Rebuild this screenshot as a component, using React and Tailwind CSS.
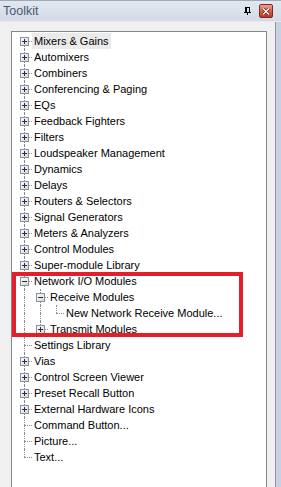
import React from "react";

// tree rows: level, expander ("+", "-", or null), label
const ROWS = [
  { l: 1, e: "+", t: "Mixers & Gains", sel: true },
  { l: 1, e: "+", t: "Automixers" },
  { l: 1, e: "+", t: "Combiners" },
  { l: 1, e: "+", t: "Conferencing & Paging" },
  { l: 1, e: "+", t: "EQs" },
  { l: 1, e: "+", t: "Feedback Fighters" },
  { l: 1, e: "+", t: "Filters" },
  { l: 1, e: "+", t: "Loudspeaker Management" },
  { l: 1, e: "+", t: "Dynamics" },
  { l: 1, e: "+", t: "Delays" },
  { l: 1, e: "+", t: "Routers & Selectors" },
  { l: 1, e: "+", t: "Signal Generators" },
  { l: 1, e: "+", t: "Meters & Analyzers" },
  { l: 1, e: "+", t: "Control Modules" },
  { l: 1, e: "+", t: "Super-module Library" },
  { l: 1, e: "-", t: "Network I/O Modules" },
  { l: 2, e: "-", t: "Receive Modules" },
  { l: 3, e: null, t: "New Network Receive Module..." },
  { l: 2, e: "+", t: "Transmit Modules" },
  { l: 1, e: null, t: "Settings Library" },
  { l: 1, e: "+", t: "Vias" },
  { l: 1, e: "+", t: "Control Screen Viewer" },
  { l: 1, e: "+", t: "Preset Recall Button" },
  { l: 1, e: "+", t: "External Hardware Icons" },
  { l: 1, e: null, t: "Command Button..." },
  { l: 1, e: null, t: "Picture..." },
  { l: 1, e: null, t: "Text..." },
];

// does a node at `level` (found at or above row i) have a later sibling?
const hasNext = (i, level) => {
  for (let j = i + 1; j < ROWS.length; j++) {
    if (ROWS[j].l < level) return false;
    if (ROWS[j].l === level) return true;
  }
  return false;
};

const Expander = ({ sign }) => (
  <svg width="9" height="9" viewBox="0 0 9 9" className="absolute left-[4px] top-[4px]">
    <defs>
      <linearGradient id="exp" x1="0" y1="0" x2="1" y2="1">
        <stop offset="0" stopColor="#ffffff" />
        <stop offset="1" stopColor="#d6d6ce" />
      </linearGradient>
    </defs>
    <rect x="0.5" y="0.5" width="8" height="8" fill="url(#exp)" stroke="#8a8f9c" />
    <rect x="2" y="4" width="5" height="1" fill="#1f2f4f" />
    {sign === "+" && <rect x="4" y="2" width="1" height="5" fill="#1f2f4f" />}
  </svg>
);

const Column = ({ top, bottom, horiz, sign }) => (
  <div className="relative w-[16px] h-[16px] shrink-0">
    {top && <div className="absolute left-[8px] top-0 h-[8px] border-l border-dotted border-[#8c8c8c]" />}
    {bottom && <div className="absolute left-[8px] top-[8px] h-[8px] border-l border-dotted border-[#8c8c8c]" />}
    {horiz && <div className="absolute left-[8px] top-[8px] w-[8px] border-t border-dotted border-[#8c8c8c]" />}
    {sign && <Expander sign={sign} />}
  </div>
);

const TreeRow = ({ row, i }) => {
  const cols = [];
  for (let c = 1; c <= row.l; c++) {
    if (c < row.l) {
      const on = hasNext(i, c);
      cols.push(<Column key={c} top={on} bottom={on} />);
    } else {
      cols.push(
        <Column key={c} top={i !== 0} bottom={hasNext(i, c)} horiz sign={row.e} />
      );
    }
  }
  return (
    <div className="flex h-[16px] items-center">
      {cols}
      <span
        className={
          "h-[16px] leading-[16px] px-[2px] whitespace-nowrap text-[11px] text-black " +
          (row.sel ? "bg-[#ebebeb]" : "")
        }
      >
        {row.t}
      </span>
    </div>
  );
};

const PinIcon = () => (
  <svg width="7" height="8" viewBox="0 0 7 8" className="block">
    <rect x="1" y="0" width="5" height="1" fill="#000" />
    <rect x="1" y="1" width="2" height="4" fill="#000" />
    <rect x="5" y="1" width="1" height="4" fill="#000" />
    <rect x="0" y="5" width="7" height="1" fill="#000" />
    <rect x="3" y="6" width="1" height="2" fill="#000" />
  </svg>
);

const CloseButton = () => (
  <div className="w-[14px] h-[14px] rounded-[2px] border border-[#7a2a22] bg-gradient-to-b from-[#e9a08e] via-[#d3624c] to-[#b63a26] flex items-center justify-center">
    <svg width="8" height="7" viewBox="0 0 8 7">
      <path d="M1 0.5 L7 6.5 M7 0.5 L1 6.5" stroke="#5a1a12" strokeWidth="2.6" />
      <path d="M1 0.5 L7 6.5 M7 0.5 L1 6.5" stroke="#ffffff" strokeWidth="1.4" />
    </svg>
  </div>
);

export default function App() {
  return (
    <div
      className="relative w-[281px] h-[487px] overflow-hidden flex flex-col bg-[#f0f0f0]"
      style={{ fontFamily: '"Liberation Sans", Arial, sans-serif' }}
    >
      {/* title bar */}
      <div className="h-[22px] shrink-0 flex items-center border-t border-[#a4a9b1] bg-gradient-to-b from-[#e2e8f0] to-[#d3dbe6] border-b border-b-[#e6eaf0]">
        <span className="pl-[3px] text-[12.5px] text-[#4a586e]">Toolkit</span>
        <div className="ml-auto flex items-center gap-[8px] pr-[8px]">
          <PinIcon />
          <CloseButton />
        </div>
      </div>

      {/* body */}
      <div className="flex flex-1 min-h-0">
        <div className="flex flex-1 min-w-0 pl-[11px] pt-[9px] pr-[8px] border-r border-[#8d939d]">
          <div className="flex-1 bg-white border border-b-0 border-[#828790] pt-[1px] pl-[4px]">
            {ROWS.map((row, i) => (
              <TreeRow key={i} row={row} i={i} />
            ))}
          </div>
        </div>
        <div className="w-[5px] bg-[#c6d2e4]" />
      </div>

      {/* red annotation box over the Network I/O group */}
      <div className="absolute left-[12px] top-[272px] w-[231px] h-[65px] border-[4px] border-[#e3202a]" />
    </div>
  );
}
